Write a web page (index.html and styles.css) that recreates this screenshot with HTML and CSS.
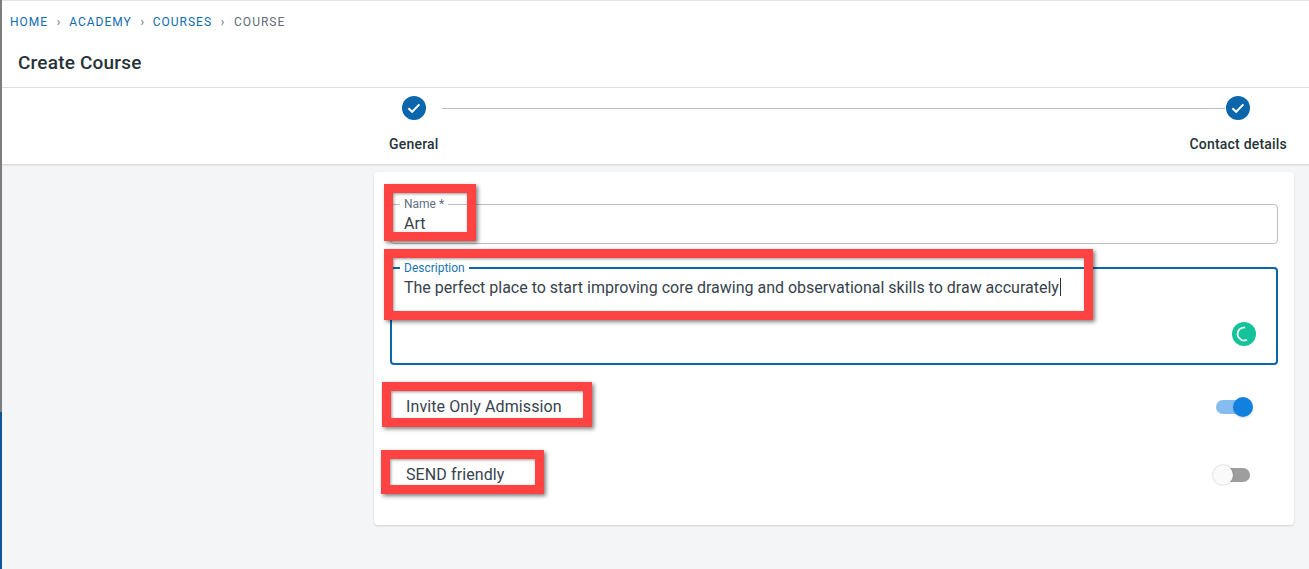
FILE: index.html
```html
<!DOCTYPE html>
<html lang="en">
<head>
    <meta charset="UTF-8">
    <title>Create Course</title>
    <link rel="stylesheet" href="styles.css">
</head>
<body>
    <div class="rail">
        <div class="rail-top"></div>
        <div class="rail-bottom"></div>
    </div>

    <div class="main">
        <header class="page-header">
            <nav class="breadcrumb">
                <a class="crumb">Home</a>
                <span class="crumb-sep">›</span>
                <a class="crumb">Academy</a>
                <span class="crumb-sep">›</span>
                <a class="crumb">Courses</a>
                <span class="crumb-sep">›</span>
                <span class="crumb current">Course</span>
            </nav>
            <h1 class="page-title">Create Course</h1>
        </header>

        <div class="stepper">
            <div class="step-icons">
                <span class="step-circle">
                    <svg width="16" height="16" viewBox="0 0 16 16"><path d="M2.4 8.2 L6.2 11.8 L13.4 4.4" fill="none" stroke="#fff" stroke-width="2"/></svg>
                </span>
                <span class="step-line"></span>
                <span class="step-circle">
                    <svg width="16" height="16" viewBox="0 0 16 16"><path d="M2.4 8.2 L6.2 11.8 L13.4 4.4" fill="none" stroke="#fff" stroke-width="2"/></svg>
                </span>
            </div>
            <div class="step-labels">
                <span>General</span>
                <span>Contact details</span>
            </div>
        </div>

        <div class="content">
            <div class="card">
                <fieldset class="field name-field">
                    <legend>Name *</legend>
                    <div class="field-value">Art</div>
                </fieldset>

                <fieldset class="field description-field">
                    <legend>Description</legend>
                    <div class="field-value">The perfect place to start improving core drawing and observational skills to draw accurately<span class="caret"></span></div>
                    <svg class="grammarly" width="24" height="24" viewBox="0 0 24 24">
                        <circle cx="12" cy="12" r="12" fill="#15c39a"/>
                        <path d="M13.1 5.6 A6.5 6.5 0 1 0 15 17.8" fill="none" stroke="#fff" stroke-width="1.6"/>
                    </svg>
                </fieldset>

                <div class="toggle-row first">
                    <span class="toggle-label">Invite Only Admission</span>
                    <span class="toggle on"><span class="thumb"></span></span>
                </div>
                <div class="toggle-row">
                    <span class="toggle-label">SEND friendly</span>
                    <span class="toggle off"><span class="thumb"></span></span>
                </div>
            </div>
        </div>
    </div>

    <!-- red highlight boxes drawn over the screenshot -->
    <div class="mark mark-name"></div>
    <div class="mark mark-description"></div>
    <div class="mark mark-invite"></div>
    <div class="mark mark-send"></div>
</body>
</html>
```

FILE: styles.css
```css
* {
    margin: 0;
    padding: 0;
    box-sizing: border-box;
}

html, body {
    height: 569px;
    overflow: hidden;
}

body {
    position: relative;
    display: flex;
    background-color: #f4f5f7;
    font-family: 'Roboto', sans-serif;
    color: #263238;
}

.rail {
    width: 2px;
    display: flex;
    flex-direction: column;
}

.rail-top {
    height: 412px;
    background-color: #7d7d7d;
}

.rail-bottom {
    flex: 1;
    background-color: #0b5796;
}

.main {
    flex: 1;
    min-width: 0;
}

.page-header {
    height: 88px;
    background-color: white;
    border-top: 1px solid #e4e4e4;
    border-bottom: 1px solid #dedede;
    padding: 14px 0 0 8px;
}

.breadcrumb {
    display: flex;
    align-items: center;
    height: 14px;
    font-size: 12px;
    letter-spacing: 1px;
    text-transform: uppercase;
}

.crumb {
    color: #0f6cb0;
}

.crumb.current {
    margin-left: 1px;
    color: #5f6b75;
}

.crumb-sep {
    width: 21px;
    text-align: center;
    color: #5f6b75;
    letter-spacing: 0;
}

.page-title {
    margin: 21px 0 0 8px;
    font-size: 19px;
    line-height: 26px;
    font-weight: 500;
    letter-spacing: 0.2px;
    color: #263238;
}

.stepper {
    height: 77px;
    background-color: white;
    border-bottom: 1px solid #dcdcdc;
    box-shadow: 0 1px 1px rgba(0, 0, 0, 0.05);
    padding-top: 8px;
}

.step-icons {
    display: flex;
    align-items: center;
    margin: 0 59px 0 400px;
}

.step-circle {
    display: flex;
    align-items: center;
    justify-content: center;
    width: 24px;
    height: 24px;
    border-radius: 50%;
    background-color: #0b66ab;
}

.step-line {
    flex: 1;
    height: 1px;
    margin: 0 1px 0 16px;
    background-color: #bdbdbd;
}

.step-labels {
    display: flex;
    justify-content: space-between;
    margin: 16px 22px 0 387px;
    font-size: 14px;
    line-height: 16px;
    font-weight: 500;
    letter-spacing: 0.2px;
    color: #263238;
}

.content {
    padding: 7px 15px 0 372px;
}

.card {
    height: 353px;
    background-color: white;
    border-radius: 4px;
    box-shadow: 0 1px 2px rgba(0, 0, 0, 0.15);
    padding: 25px 16px 0;
}

.field {
    position: relative;
    border: 1px solid #bdbdbd;
    border-radius: 4px;
    padding: 0 13px;
}

.field legend {
    margin-left: -4px;
    padding: 0 4px;
    font-size: 12px;
    line-height: 14px;
    color: #607080;
}

.field-value {
    padding-top: 3px;
    font-size: 16px;
    line-height: 20px;
    color: #37424d;
}

.name-field {
    height: 47px;
}

.description-field {
    height: 104px;
    margin-top: 17px;
    border: 2px solid #0b66ab;
    padding: 0 12px;
}

.description-field legend {
    color: #1a75b8;
}

.caret {
    display: inline-block;
    width: 1px;
    height: 18px;
    margin-left: 1px;
    vertical-align: -3px;
    background-color: #263238;
}

.grammarly {
    position: absolute;
    right: 20px;
    bottom: 17px;
}

.toggle-row {
    display: flex;
    align-items: center;
    justify-content: space-between;
    height: 24px;
    margin-top: 44px;
    padding: 0 28px 0 16px;
}

.toggle-row.first {
    margin-top: 30px;
}

.toggle-label {
    font-size: 16px;
    letter-spacing: 0.1px;
    color: #37424d;
    margin-bottom: 1px;
}

.toggle {
    display: flex;
    align-items: center;
    width: 34px;
    height: 14px;
    border-radius: 7px;
}

.thumb {
    width: 20px;
    height: 20px;
    border-radius: 50%;
}

.toggle.on {
    justify-content: flex-end;
    background-color: #86bdf0;
}

.toggle.on .thumb {
    margin-right: -3px;
    background-color: #1280de;
    box-shadow: 0 1px 2px rgba(0, 0, 0, 0.15);
}

.toggle.off {
    justify-content: flex-start;
    background-color: #9e9e9e;
}

.toggle.off .thumb {
    margin-left: -3px;
    background-color: #fafafa;
    box-shadow: 0 0 2px rgba(0, 0, 0, 0.3);
}

.mark {
    position: absolute;
    border: 9px solid #ff4343;
    box-shadow: 2px 2px 4px rgba(0, 0, 0, 0.5), inset 1px 1px 3px rgba(0, 0, 0, 0.4);
}

.mark-name {
    left: 384px;
    top: 184px;
    width: 92px;
    height: 57px;
}

.mark-description {
    left: 384px;
    top: 249px;
    width: 709px;
    height: 71px;
}

.mark-invite {
    left: 382px;
    top: 382px;
    width: 210px;
    height: 45px;
}

.mark-send {
    left: 381px;
    top: 450px;
    width: 163px;
    height: 44px;
}
```
